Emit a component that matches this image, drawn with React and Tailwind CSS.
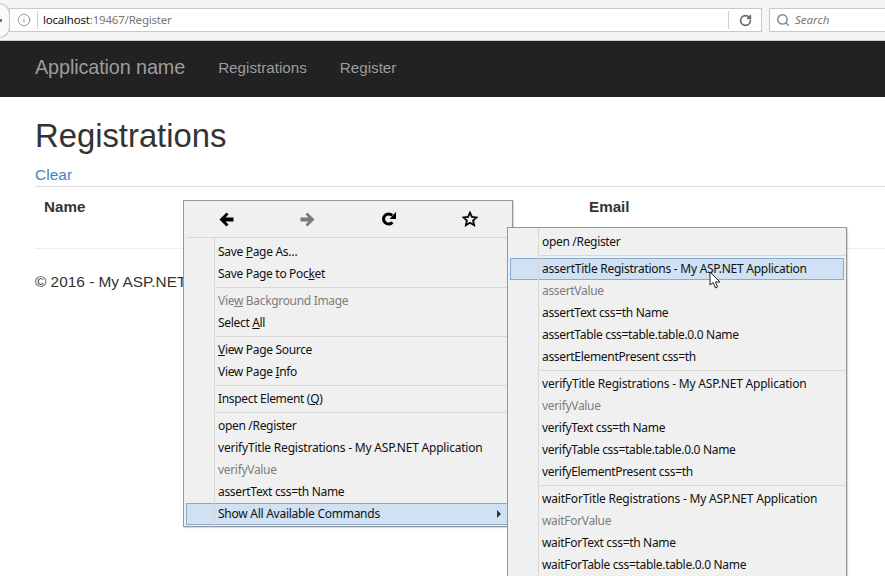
import { RotateCw, Search, Info } from 'lucide-react';

function Item({ children, muted, title }) {
  return (
    <div className={`h-[22px] flex items-center pl-[34px] pr-[8px] text-[12px] whitespace-nowrap ${title ? 'tracking-[-0.2px]' : 'tracking-[-0.32px]'} ${muted ? 'text-[#7d7d7d]' : 'text-[#111]'}`}>
      <span>{children}</span>
    </div>
  );
}

function ActiveItem({ children, arrow }) {
  return (
    <div className="h-[22px] mx-[2px] flex items-center justify-between pl-[31px] pr-[8px] text-[12px] tracking-[-0.26px] whitespace-nowrap text-[#111] bg-[#cfe1f3] border border-[#83abd3]">
      <span>{children}</span>
      {arrow && <span className="w-0 h-0 border-y-[4px] border-y-transparent border-l-[4px] border-l-[#333]"></span>}
    </div>
  );
}

function Sep() {
  return <div className="h-[1px] bg-[#d8d8d8] ml-[30px] my-[2px]"></div>;
}

function BackIcon() {
  return (
    <svg width="15" height="15" viewBox="0 0 15 15" fill="#000">
      <path d="M0.5 7.5 L7.5 0.5 L9.5 2.5 L6.5 5.5 L14.5 5.5 L14.5 9.5 L6.5 9.5 L9.5 12.5 L7.5 14.5 Z" />
    </svg>
  );
}

function ForwardIcon() {
  return (
    <svg width="15" height="15" viewBox="0 0 15 15" fill="#7b7b7b">
      <path d="M14.5 7.5 L7.5 0.5 L5.5 2.5 L8.5 5.5 L0.5 5.5 L0.5 9.5 L8.5 9.5 L5.5 12.5 L7.5 14.5 Z" />
    </svg>
  );
}

function ReloadIcon() {
  return (
    <svg width="16" height="16" viewBox="0 0 16 16">
      <path d="M11.4 11.2 A5 5 0 1 1 11.2 4.6" fill="none" stroke="#000" strokeWidth="3" />
      <path d="M15 1 L15 8 L8.5 8 Z" fill="#000" />
    </svg>
  );
}

function StarIcon() {
  return (
    <svg width="16" height="16" viewBox="0 0 16 16">
      <path d="M8 1.6 L9.9 5.9 L14.6 6.4 L11.1 9.5 L12.1 14.2 L8 11.8 L3.9 14.2 L4.9 9.5 L1.4 6.4 L6.1 5.9 Z" fill="none" stroke="#000" strokeWidth="1.8" strokeLinejoin="miter" />
    </svg>
  );
}

export default function App() {
  return (
    <div className="relative w-[885px] h-[576px] overflow-hidden bg-white font-['Liberation_Sans',sans-serif] text-[#333]">
      {/* browser toolbar */}
      <div className="h-[41px] bg-[#f5f5f6] border-b border-[#cfcfcf] flex items-center">
        <div className="w-[11px] h-[35px] -ml-[1px] rounded-r-full border border-[#c4c4c4] bg-[#fafafa] shrink-0 flex items-center">
          <div className="w-[2px] h-[3px] bg-[#777]"></div>
        </div>
        <div className="-ml-[1px] w-[753px] h-[24px] bg-white border border-[#c9c9c9] flex items-center shrink-0">
          <Info className="w-[14px] h-[14px] ml-[7px] text-[#8d8d8d]" strokeWidth={1.5} />
          <div className="w-px h-[18px] bg-[#cfcfcf] ml-[6px]"></div>
          <span className="ml-[5px] text-[11.5px] font-['Noto_Sans',sans-serif] tracking-[-0.2px] text-[#111]">localhost<span className="text-[#777]">:19467/Register</span></span>
          <div className="ml-auto w-px h-[18px] bg-[#cfcfcf]"></div>
          <div className="w-[32px] flex justify-center">
            <RotateCw className="w-[13px] h-[13px] text-[#666]" strokeWidth={3} />
          </div>
        </div>
        <div className="ml-[7px] flex-1 h-[24px] bg-white border border-r-0 border-[#c9c9c9] flex items-center">
          <Search className="w-[14px] h-[14px] ml-[6px] text-[#888]" strokeWidth={2.5} />
          <span className="ml-[5px] text-[11.5px] italic font-['Noto_Sans',sans-serif] text-[#777]">Search</span>
        </div>
      </div>

      {/* navbar */}
      <div className="h-[56px] bg-[#222] flex items-center pl-[35px] pb-[2px]">
        <span className="text-[19.8px] text-[#9d9d9d] tracking-[-0.1px]">Application name</span>
        <span className="ml-[33px] text-[15.2px] text-[#9d9d9d]">Registrations</span>
        <span className="ml-[33px] text-[15.2px] text-[#9d9d9d]">Register</span>
      </div>

      {/* page body */}
      <div className="pl-[35px]">
        <h1 className="mt-[20px] text-[32.8px] leading-[38px]">Registrations</h1>
        <a className="block mt-[11px] text-[15.5px] leading-[18px] text-[#3f84c0]">Clear</a>
        <div className="mt-[2px] border-t border-[#ddd] h-[62px] flex pt-[11px] text-[15.2px] font-bold leading-[18px]">
          <span className="ml-[9px] w-[545px]">Name</span>
          <span>Email</span>
        </div>
        <div className="border-t border-[#eee] pt-[24px] text-[15.4px] leading-[18px]">© 2016 - My ASP.NET Application</div>
      </div>

      {/* context menu */}
      <div className="absolute left-[183px] top-[200px] w-[330px] h-[327px] bg-[#f0f0f0] border border-[#979797] font-['Noto_Sans',sans-serif] shadow-[1px_1px_1px_rgba(0,0,0,0.15)]">
        <div className="absolute left-[30px] top-[37px] bottom-0 w-px bg-[#d8d8d8]"></div>
        <div className="h-[37px] grid grid-cols-[81px_81px_81px_81px] justify-items-center items-center border-b border-[#d8d8d8] mx-[2px]">
          <BackIcon />
          <ForwardIcon />
          <ReloadIcon />
          <StarIcon />
        </div>
        <div className="pt-[3px]">
          <Item>Save <u>P</u>age As…</Item>
          <Item>Save Page to Poc<u>k</u>et</Item>
          <Sep />
          <Item muted>Vie<u>w</u> Background Image</Item>
          <Item>Select <u>A</u>ll</Item>
          <Sep />
          <Item><u>V</u>iew Page Source</Item>
          <Item>View Page <u>I</u>nfo</Item>
          <Sep />
          <Item>Inspect Element (<u>Q</u>)</Item>
          <Sep />
          <Item>open /Register</Item>
          <Item title>verifyTitle Registrations - My ASP.NET Application</Item>
          <Item muted>verifyValue</Item>
          <Item>assertText css=th Name</Item>
          <ActiveItem arrow>Show All Available Commands</ActiveItem>
        </div>
      </div>

      {/* submenu */}
      <div className="absolute left-[507px] top-[227px] w-[340px] h-[360px] bg-[#f0f0f0] border border-[#979797] font-['Noto_Sans',sans-serif] pt-[3px] shadow-[1px_1px_1px_rgba(0,0,0,0.15)]">
        <div className="absolute left-[30px] top-0 bottom-0 w-px bg-[#d8d8d8]"></div>
        <Item>open /Register</Item>
        <Sep />
        <ActiveItem>assertTitle Registrations - My ASP.NET Application</ActiveItem>
        <Item muted>assertValue</Item>
        <Item>assertText css=th Name</Item>
        <Item>assertTable css=table.table.0.0 Name</Item>
        <Item>assertElementPresent css=th</Item>
        <Sep />
        <Item title>verifyTitle Registrations - My ASP.NET Application</Item>
        <Item muted>verifyValue</Item>
        <Item>verifyText css=th Name</Item>
        <Item>verifyTable css=table.table.0.0 Name</Item>
        <Item>verifyElementPresent css=th</Item>
        <Sep />
        <Item title>waitForTitle Registrations - My ASP.NET Application</Item>
        <Item muted>waitForValue</Item>
        <Item>waitForText css=th Name</Item>
        <Item>waitForTable css=table.table.0.0 Name</Item>
      </div>

      {/* mouse cursor */}
      <svg className="absolute left-[709px] top-[271px]" width="13" height="19" viewBox="0 0 13 19">
        <path d="M1 1 L1 14 L4 11.5 L6.5 17 L8.5 16 L6.5 11 L11 11 Z" fill="#fff" stroke="#222" strokeWidth="1" strokeLinejoin="round" />
      </svg>
    </div>
  );
}
